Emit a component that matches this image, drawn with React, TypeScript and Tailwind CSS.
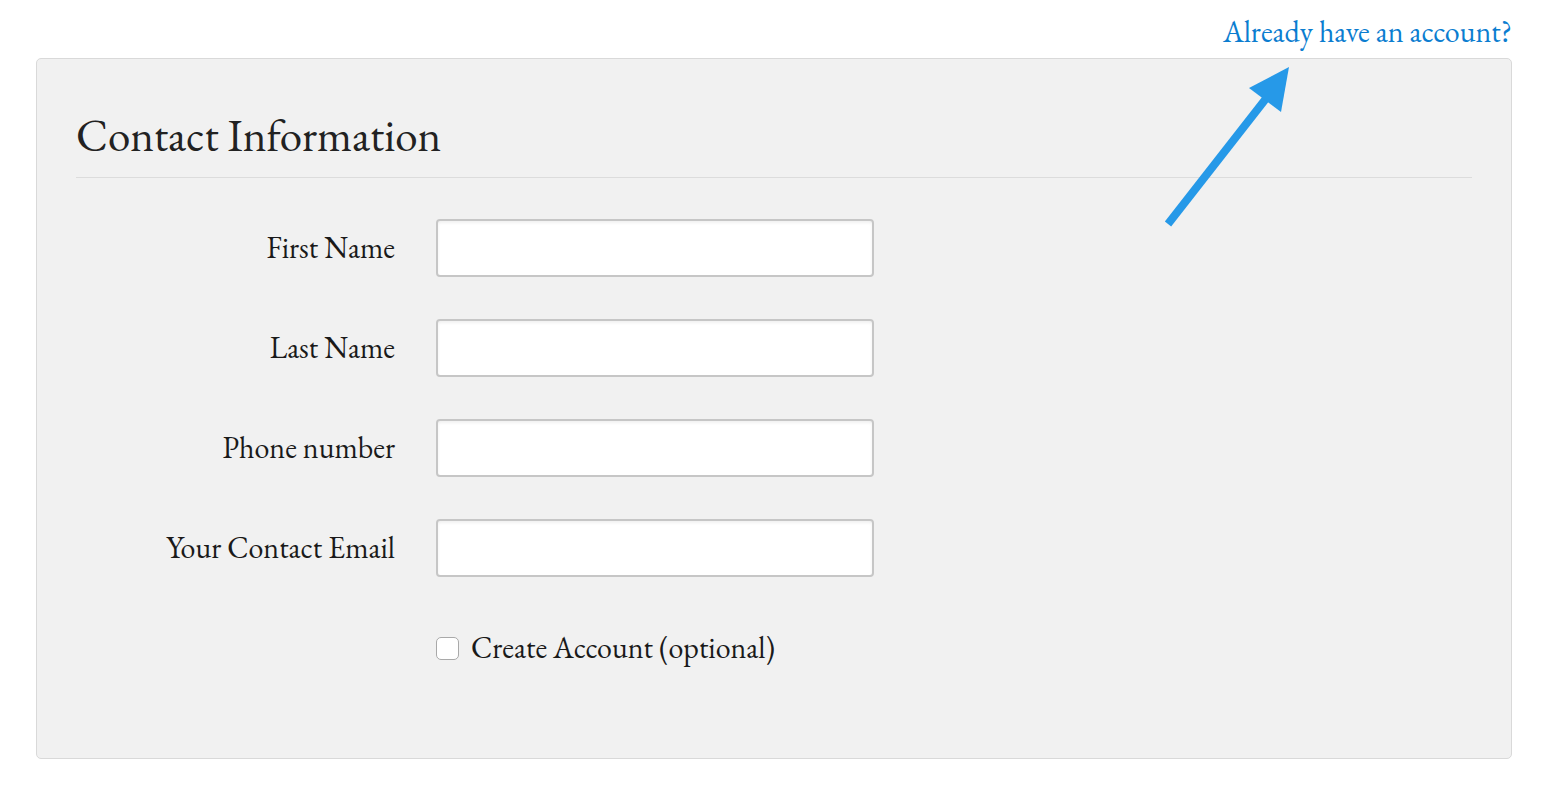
const serif = { fontFamily: '"EB Garamond", Garamond, "Liberation Serif", serif' };

const fields = ["First Name", "Last Name", "Phone number", "Your Contact Email"];

export default function App() {
  return (
    <div className="relative min-h-screen bg-white" style={serif}>
      <div className="pl-[36px] pr-[32px] pt-[16px]">
        <div className="flex justify-end">
          <a href="#" className="text-[30px] leading-[32px] text-[#0b7dd0]">
            Already have an account?
          </a>
        </div>

        <div className="mt-[10px] h-[701px] rounded-[5px] border border-[#d9d9d9] bg-[#f1f1f1] px-[39px] pt-[52px]">
          <h2 className="text-[45px] leading-[48px] text-[#222]">Contact Information</h2>
          <div className="mt-[18px] border-t border-[#dcdcdc]" />

          <div className="mt-[41px] flex flex-col gap-[42px]">
            {fields.map((f) => (
              <div key={f} className="flex items-center gap-[41px]">
                <label className="w-[319px] text-right text-[30px] leading-[36px] text-[#1a1a1a]">{f}</label>
                <input
                  type="text"
                  className="h-[58px] w-[438px] rounded-[4px] border-2 border-[#c6c6c6] bg-white shadow-[inset_0_2px_3px_rgba(0,0,0,0.06)] outline-none"
                />
              </div>
            ))}
          </div>

          <div className="mt-[53px] flex items-center gap-[12px] pl-[360px]">
            <span className="h-[23px] w-[23px] rounded-[5px] border border-[#a9a9a9] bg-white" />
            <span className="text-[30px] leading-[36px] text-[#1a1a1a]">Create Account (optional)</span>
          </div>
        </div>
      </div>

      <svg className="absolute left-[1160px] top-[60px]" width="140" height="172" viewBox="0 0 140 172">
        <line x1="8" y1="164" x2="108" y2="36" stroke="#2699e8" strokeWidth="8" />
        <polygon points="129,7 89,28 121,52" fill="#2699e8" />
      </svg>
    </div>
  );
}
